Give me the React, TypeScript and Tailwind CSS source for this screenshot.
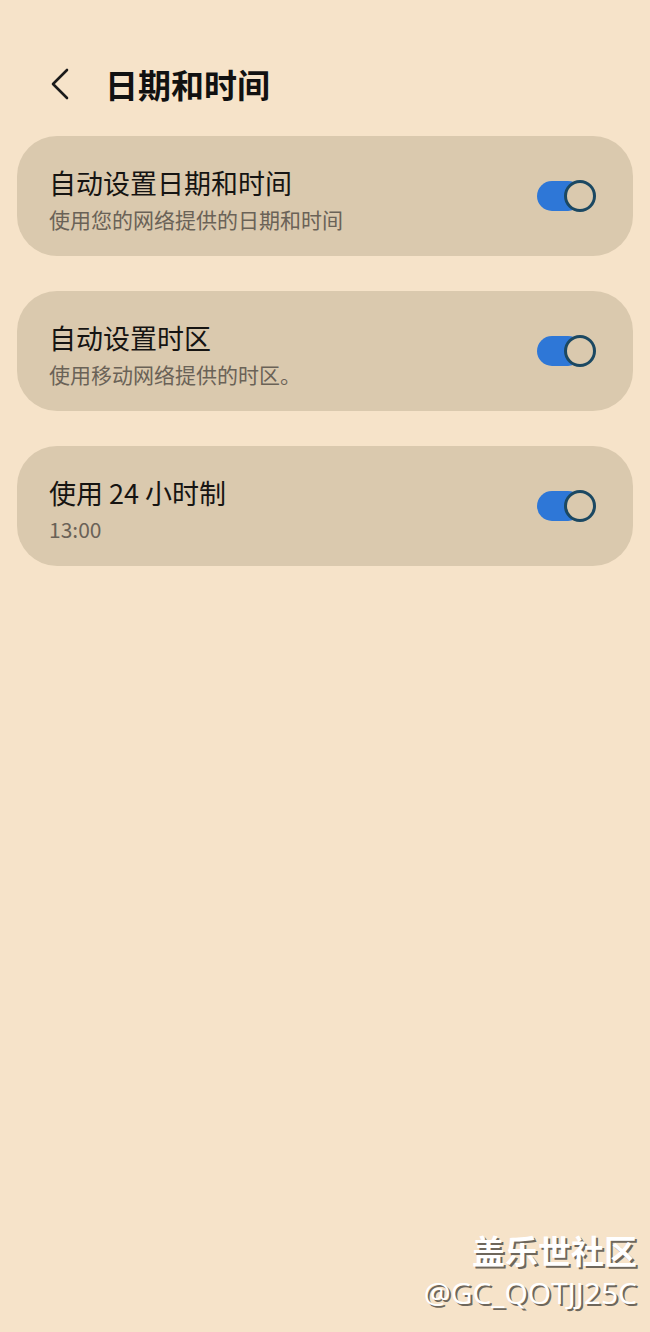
const cjk = "font-['Noto_Sans_CJK_SC','Noto_Sans',sans-serif]"

type Row = { title: string; sub: string }

const rows: Row[] = [
  { title: '自动设置日期和时间', sub: '使用您的网络提供的日期和时间' },
  { title: '自动设置时区', sub: '使用移动网络提供的时区。' },
  { title: '使用 24 小时制', sub: '13:00' },
]

function Toggle() {
  return (
    <div className="relative h-[32px] w-[59px] shrink-0">
      <div className="absolute left-0 top-[1px] h-[30px] w-[46px] rounded-full bg-[#2e77d7]" />
      <div className="absolute right-0 top-0 h-[32px] w-[32px] rounded-full border-[3px] border-[#1b4862] bg-[#dac9ae]" />
    </div>
  )
}

function SettingCard({ title, sub }: Row) {
  return (
    <div className="flex h-[120px] items-center justify-between rounded-[40px] bg-[#dac9ae] pl-[32px] pr-[37px]">
      <div className="flex flex-col pt-[7px]">
        <span className="text-[27px] leading-[34px] text-[#161412]">{title}</span>
        <span className="mt-[5px] text-[21px] leading-[28px] text-[#6a6257]">{sub}</span>
      </div>
      <Toggle />
    </div>
  )
}

export default function App() {
  return (
    <div className={`relative min-h-[1332px] w-full bg-[#f6e3c9] ${cjk}`}>
      <div className="h-[136px] pt-[62px]">
        <div className="flex h-[44px] items-center pl-[50px]">
          <svg width="20" height="32" viewBox="0 0 20 32" fill="none">
            <path d="M17 2 L3 16 L17 30" stroke="#1a1a1a" strokeWidth="2.6" strokeLinecap="round" strokeLinejoin="round" />
          </svg>
          <h1 className="ml-[35px] text-[33px] font-bold leading-[44px] text-[#111]">日期和时间</h1>
        </div>
      </div>
      <div className="mx-[17px] flex flex-col gap-[35px]">
        {rows.map((r) => (
          <SettingCard key={r.title} {...r} />
        ))}
      </div>
      <div className="absolute bottom-[20px] right-[13px] flex flex-col items-end text-white">
        <span className="text-[33px] font-bold leading-[40px] [text-shadow:2px_2px_0_#6e675c]">盖乐世社区</span>
        <span className="mt-[4px] font-['Open_Sans',sans-serif] text-[30px] leading-[38px] [text-shadow:2px_2px_0_#6e675c]">@GC_QOTJJ25C</span>
      </div>
    </div>
  )
}
